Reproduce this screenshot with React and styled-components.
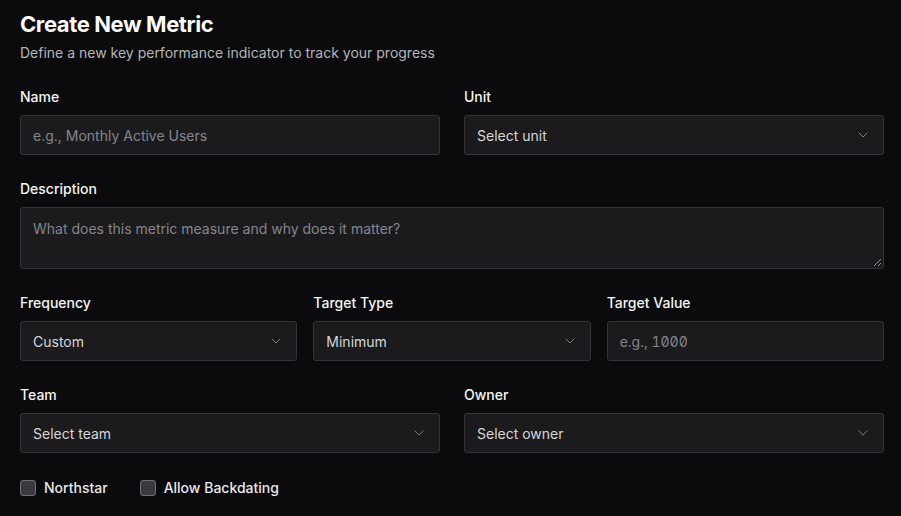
import React from "react";
import styled, { createGlobalStyle } from "styled-components";
import { ChevronDown } from "lucide-react";

const GlobalStyle = createGlobalStyle`
  html, body {
    margin: 0;
    padding: 0;
    background: #0b0b0d;
  }
  body {
    font-family: Inter, "Noto Sans", sans-serif;
    color: #f4f4f5;
  }
  * { box-sizing: border-box; }
`;

const Page = styled.div`
  width: 901px;
  height: 516px;
  padding: 10px 17px 0 20px;
  background: #0b0b0d;
  overflow: hidden;
`;

const Title = styled.h1`
  margin: 0;
  font-size: 22px;
  line-height: 28px;
  font-weight: 700;
  letter-spacing: -0.4px;
  color: #fafafa;
`;

const Subtitle = styled.p`
  margin: 5px 0 0;
  font-size: 14px;
  line-height: 20px;
  color: #b4b4b8;
`;

const Form = styled.div`
  margin-top: 24px;
  display: flex;
  flex-direction: column;
  gap: 24px;
`;

const Row = styled.div`
  display: grid;
  grid-template-columns: repeat(${(p) => p.$cols}, 1fr);
  column-gap: ${(p) => (p.$cols === 3 ? "16px" : "24px")};
`;

const Field = styled.div`
  display: flex;
  flex-direction: column;
  gap: 8px;
`;

const Label = styled.label`
  font-size: 14px;
  line-height: 20px;
  font-weight: 500;
  color: #f4f4f5;
`;

const Box = styled.div`
  height: 40px;
  display: flex;
  align-items: center;
  justify-content: space-between;
  padding: 0 12px 0 12px;
  background: #1b1b1e;
  border: 1px solid #333338;
  border-radius: 3px;
  font-size: 14px;
  color: ${(p) => (p.$placeholder ? "#85858c" : "#d6d6da")};
  font-variant-numeric: ${(p) => (p.$mono ? "slashed-zero tabular-nums" : "normal")};
  svg {
    color: #7c7c84;
  }
`;

const TextArea = styled.div`
  height: 62px;
  padding: 11px 12px;
  background: #1b1b1e;
  border: 1px solid #333338;
  border-radius: 3px;
  font-size: 14px;
  line-height: 20px;
  color: #85858c;
  position: relative;
`;

const Grip = styled.svg`
  position: absolute;
  right: 1px;
  bottom: 1px;
`;

const Checks = styled.div`
  margin-top: 1px;
  display: flex;
  gap: 32px;
`;

const CheckItem = styled.label`
  display: flex;
  align-items: center;
  gap: 8px;
  font-size: 14px;
  font-weight: 500;
  color: #e8e8ea;
`;

const CheckBox = styled.span`
  width: 16px;
  height: 16px;
  margin-top: 2px;
  border-radius: 3px;
  background: #3a3a40;
  border: 1px solid #707078;
`;

const Select = ({ value, placeholder }) => (
  <Box $placeholder={placeholder}>
    <span>{value}</span>
    <ChevronDown size={16} strokeWidth={1.5} />
  </Box>
);

const App = () => {
  return (
    <Page>
      <GlobalStyle />
      <Title>Create New Metric</Title>
      <Subtitle>Define a new key performance indicator to track your progress</Subtitle>
      <Form>
        <Row $cols={2}>
          <Field>
            <Label>Name</Label>
            <Box $placeholder>e.g., Monthly Active Users</Box>
          </Field>
          <Field>
            <Label>Unit</Label>
            <Select value="Select unit" />
          </Field>
        </Row>
        <Field>
          <Label>Description</Label>
          <TextArea>
            What does this metric measure and why does it matter?
            <Grip width="9" height="9" viewBox="0 0 9 9">
              <path d="M1 8 L8 1 M5 8 L8 5" stroke="#8a8a90" strokeWidth="1" />
            </Grip>
          </TextArea>
        </Field>
        <Row $cols={3}>
          <Field>
            <Label>Frequency</Label>
            <Select value="Custom" />
          </Field>
          <Field>
            <Label>Target Type</Label>
            <Select value="Minimum" />
          </Field>
          <Field>
            <Label>Target Value</Label>
            <Box $placeholder $mono>e.g., 1000</Box>
          </Field>
        </Row>
        <Row $cols={2}>
          <Field>
            <Label>Team</Label>
            <Select value="Select team" />
          </Field>
          <Field>
            <Label>Owner</Label>
            <Select value="Select owner" />
          </Field>
        </Row>
        <Checks>
          <CheckItem>
            <CheckBox />
            Northstar
          </CheckItem>
          <CheckItem>
            <CheckBox />
            Allow Backdating
          </CheckItem>
        </Checks>
      </Form>
    </Page>
  );
};

export default App;
